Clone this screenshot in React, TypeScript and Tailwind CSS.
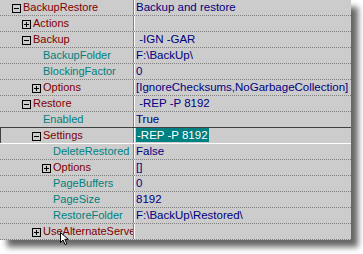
import React from 'react';

type Row = {
  label: string;
  value?: string;
  level: number;
  kind: 'open' | 'closed' | 'leaf';
  selected?: boolean;
};

const rows: Row[] = [
  { label: 'BackupRestore', value: 'Backup and restore', level: 0, kind: 'open' },
  { label: 'Actions', level: 1, kind: 'closed' },
  { label: 'Backup', value: ' -IGN -GAR', level: 1, kind: 'open' },
  { label: 'BackupFolder', value: 'F:\\BackUp\\', level: 2, kind: 'leaf' },
  { label: 'BlockingFactor', value: '0', level: 2, kind: 'leaf' },
  { label: 'Options', value: '[IgnoreChecksums,NoGarbageCollection]', level: 2, kind: 'closed' },
  { label: 'Restore', value: ' -REP -P 8192', level: 1, kind: 'open' },
  { label: 'Enabled', value: 'True', level: 2, kind: 'leaf' },
  { label: 'Settings', value: '-REP -P 8192', level: 2, kind: 'open', selected: true },
  { label: 'DeleteRestored', value: 'False', level: 3, kind: 'leaf' },
  { label: 'Options', value: '[]', level: 3, kind: 'closed' },
  { label: 'PageBuffers', value: '0', level: 3, kind: 'leaf' },
  { label: 'PageSize', value: '8192', level: 3, kind: 'leaf' },
  { label: 'RestoreFolder', value: 'F:\\BackUp\\Restored\\', level: 3, kind: 'leaf' },
  { label: 'UseAlternateServer', level: 2, kind: 'closed' },
];

const indent = ['pl-[12px]', 'pl-[22px]', 'pl-[32px]', 'pl-[42px]'];

const ExpandBox: React.FC<{ open: boolean }> = ({ open }) => (
  <div className="relative w-[9px] h-[9px] border border-black shrink-0 mt-[4px] mr-[2px]">
    <div className="absolute left-[1px] top-[3px] w-[5px] h-px bg-black" />
    {!open && <div className="absolute left-[3px] top-[1px] w-px h-[5px] bg-black" />}
  </div>
);

const App: React.FC = () => {
  return (
    <div className="w-[363px] h-[254px] bg-white overflow-hidden relative" style={{ fontFamily: '"Liberation Sans", Arial, sans-serif' }}>
      <div className="w-[351px] bg-[#cccccc] shadow-[7px_7px_6px_rgba(0,0,0,0.6)]">
        {rows.map((r, i) => {
          const beforeSelected = rows[i + 1]?.selected;
          const border = r.selected
            ? 'border-t border-t-[#404040] border-b border-b-white shadow-[inset_1px_0_0_#404040]'
            : beforeSelected
              ? 'border-b border-solid border-b-[#707070]'
              : 'border-b border-dotted border-b-[#808080]';
          const labelColor = r.kind === 'leaf' ? 'text-[#008080]' : 'text-[#800000]';
          return (
            <div
              key={i}
              className={`flex h-4 ${border} ${r.selected ? 'mt-[-1px] h-[17px]' : ''}`}
            >
              <div className={`w-[133px] flex items-start overflow-hidden whitespace-nowrap text-[11px] ${indent[r.level]}`}>
                {r.kind === 'leaf' ? (
                  <span className="w-[11px] shrink-0" />
                ) : (
                  <ExpandBox open={r.kind === 'open'} />
                )}
                <span className={`leading-[15px] ${labelColor}`}>{r.label}</span>
              </div>
              <div className="w-px bg-[#808080]" />
              <div className="w-px bg-white" />
              <div className="flex-1 pl-px overflow-hidden whitespace-nowrap text-[11.5px] text-[#000080] leading-[15px]">
                {r.selected ? (
                  <span className="inline-block bg-[#008080] text-white px-px leading-[14px]">{r.value}</span>
                ) : (
                  <span className="whitespace-pre">{r.value}</span>
                )}
              </div>
            </div>
          );
        })}
      </div>
      <svg className="absolute left-[60px] top-[232px]" width="10" height="13" viewBox="0 0 10 13">
        <path d="M0.5 0.5 L0.5 10.5 L3 8 L5 12.5 L6.8 11.7 L4.8 7.3 L8.3 7.3 Z" fill="white" stroke="black" strokeWidth="1" />
      </svg>
    </div>
  );
};

export default App;
